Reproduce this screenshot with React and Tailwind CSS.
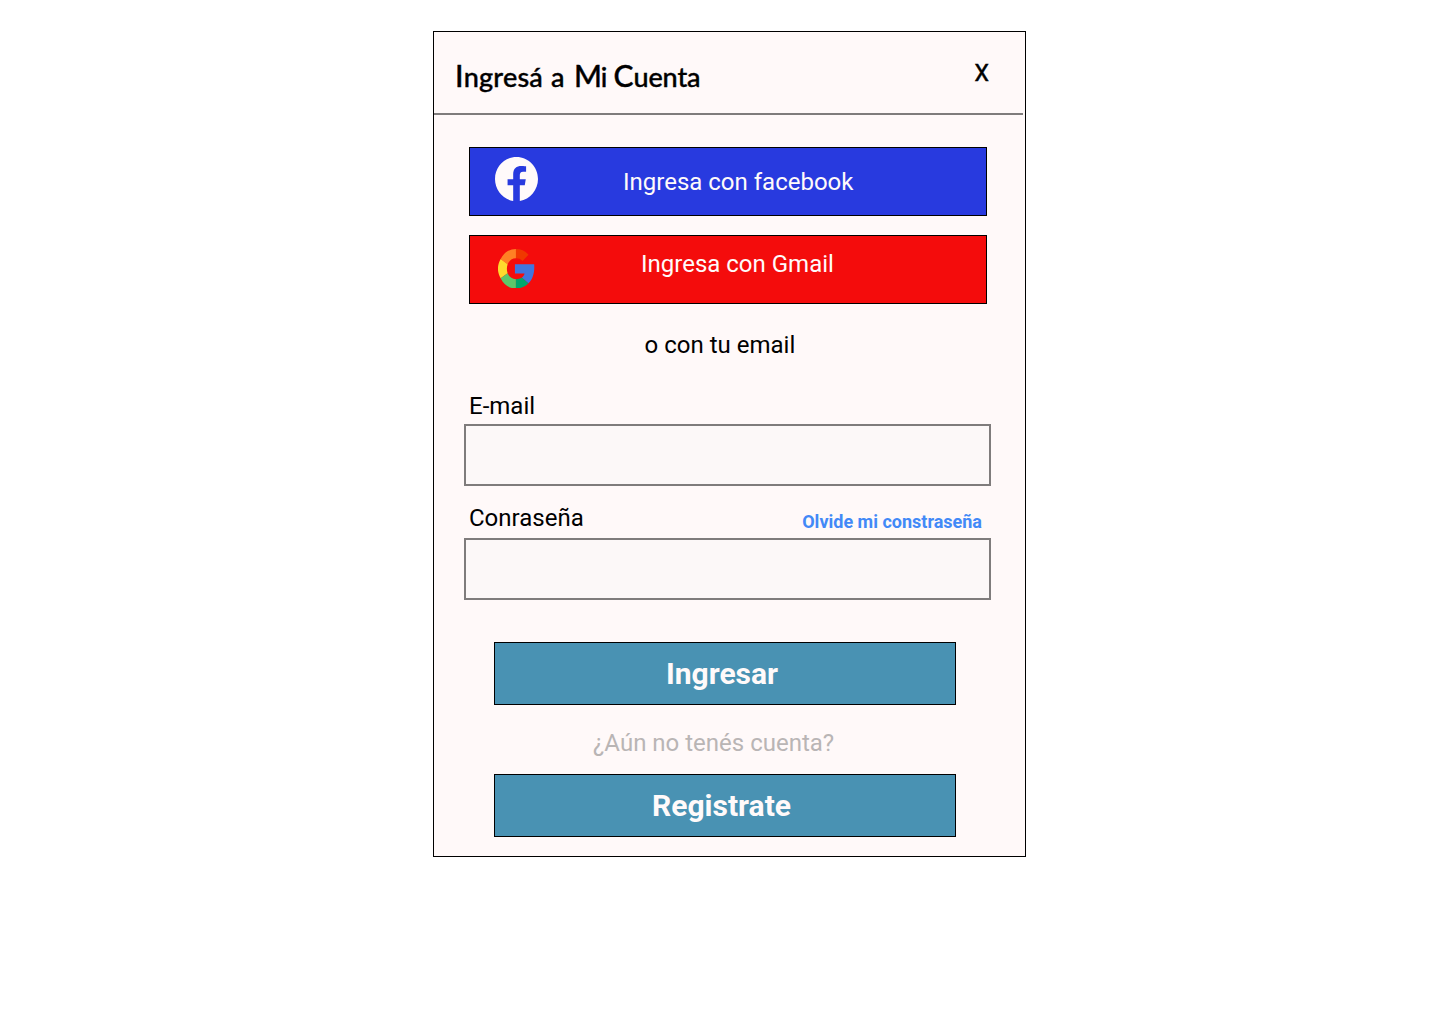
function FacebookIcon() {
  return (
    <svg className="ml-[25px] mt-[9px] h-11 w-[43px] shrink-0" viewBox="0 0 130 132" preserveAspectRatio="none">
      <path
        fill="#fffafa"
        d="M65 0C29 0 0 29.500 0 66C0 99 24 127 55 132V85H38V67H55V52C55 34 65 27 80 27C87 27 94 28 94 28V44H85C77 44 75 49 75 55V67H93L90 85H75V132C106 127 130 99 130 66C130 29.500 101 0 65 0Z"
      />
    </svg>
  );
}

function GoogleIcon() {
  return (
    <svg className="ml-7 mt-[12.700px] h-[39.500px] w-[36.500px] shrink-0" viewBox="0 0 110 119" preserveAspectRatio="none">
      <path fill="#f03800" d="M54 0C68 0 81 5 92 17L74 36C68 30 62 28 54 28Z" />
      <path fill="#ff8024" d="M54 0V28C43 28 34 34 29 46L8 30C18 11 34 0 54 0Z" />
      <path fill="#ffda2d" d="M8 30L29 46C26 55 26 64 29 73L8 88C-3 69 -3 49 8 30Z" />
      <path fill="#5cc76a" d="M8 88L29 73C34 85 43 91 54 91V119C34 119 18 108 8 88Z" />
      <path fill="#00a66c" d="M54 91C61 91 67 89 72 86L92 103C82 113 69 119 54 119Z" />
      <path fill="#4175df" d="M51 46H109C111 68 106 90 92 103L72 86C76 83 79 79 80 74H51Z" />
    </svg>
  );
}

function Field({ label, type, children }) {
  return (
    <label className="block">
      <span className="flex items-start justify-between pl-[5px] pr-[9px]">
        <span className="text-2xl leading-7">{label}</span>
        {children}
      </span>
      <input type={type} className="block h-[62px] w-[527px] border-2 border-[#7f7c7c] bg-[#fcf8f8] px-3 text-2xl outline-none" />
    </label>
  );
}

export default function App() {
  return (
    <main className="flex h-[1024px] w-[1440px] items-start bg-white pl-[433px] pt-[31px] font-['Roboto',sans-serif] text-black">
      <section className="flex h-[826px] w-[593px] flex-col border border-black bg-[#fff9f9]">
        <header className="flex h-[83px] w-[589px] items-start justify-between border-b-2 border-[#7f7c7c] pl-[21px] pr-[34px]">
          <h1 className="mt-[25px] flex items-baseline whitespace-nowrap font-['Lato',sans-serif] text-[27px] font-medium leading-9 tracking-[0.2px] [-webkit-text-stroke:0.4px_black]">
            <span className="inline-block w-24 first-letter:text-[30px]">Ingresá</span>
            <span className="w-[23px]">a</span>
            <span className="inline-block w-[39.500px] tracking-[-1.200px] first-letter:text-[30px]">Mi</span>
            <span className="inline-block tracking-[-0.1px] first-letter:text-[30px]">Cuenta</span>
          </h1>
          <button className="mt-7 text-[23px] leading-7 [-webkit-text-stroke:0.5px_black]">X</button>
        </header>

        <div className="ml-[35px] mt-8 flex w-[518px] flex-col gap-[19px] text-2xl leading-7 text-[#fffafa]">
          <button className="flex h-[69px] items-start border border-black bg-[#283adf]">
            <FacebookIcon />
            <span className="ml-[85px] mt-5 whitespace-nowrap">Ingresa con facebook</span>
          </button>
          <button className="flex h-[69px] items-start border border-black bg-[#f40c0c]">
            <GoogleIcon />
            <span className="ml-[106.500px] mt-3.5 whitespace-nowrap">Ingresa con Gmail</span>
          </button>
        </div>

        <p className="ml-[210.600px] mt-[27px] text-2xl leading-7">o con tu email</p>

        <form className="ml-[30px] mt-[33px] flex w-[527px] flex-col gap-[18px]">
          <div className="[&_input]:mt-1">
            <Field label="E-mail" type="email" />
          </div>
          <div className="[&_input]:mt-1.5">
            <Field label="Conraseña" type="password">
              <a className="mt-[7px] whitespace-nowrap text-lg font-bold leading-[21px] text-[#4289f7]">Olvide mi constraseña</a>
            </Field>
          </div>
        </form>

        <div className="ml-[60px] mt-[42px] flex w-[462px] flex-col">
          <button className="flex h-[63px] justify-center border border-black bg-[#4992b3] pr-1.5 pt-[13px] text-[30px] font-bold leading-[35px] text-[#fffafa]">
            Ingresar
          </button>
          <p className="ml-[99px] mt-6 h-[45px] whitespace-nowrap text-2xl leading-7 text-[#b9b5b5]">¿Aún no tenés cuenta?</p>
          <button className="flex h-[63px] justify-center border border-black bg-[#4992b3] pr-[7px] pt-[13px] text-[30px] font-bold leading-[35px] text-[#fffafa]">
            Registrate
          </button>
        </div>
      </section>
    </main>
  );
}
